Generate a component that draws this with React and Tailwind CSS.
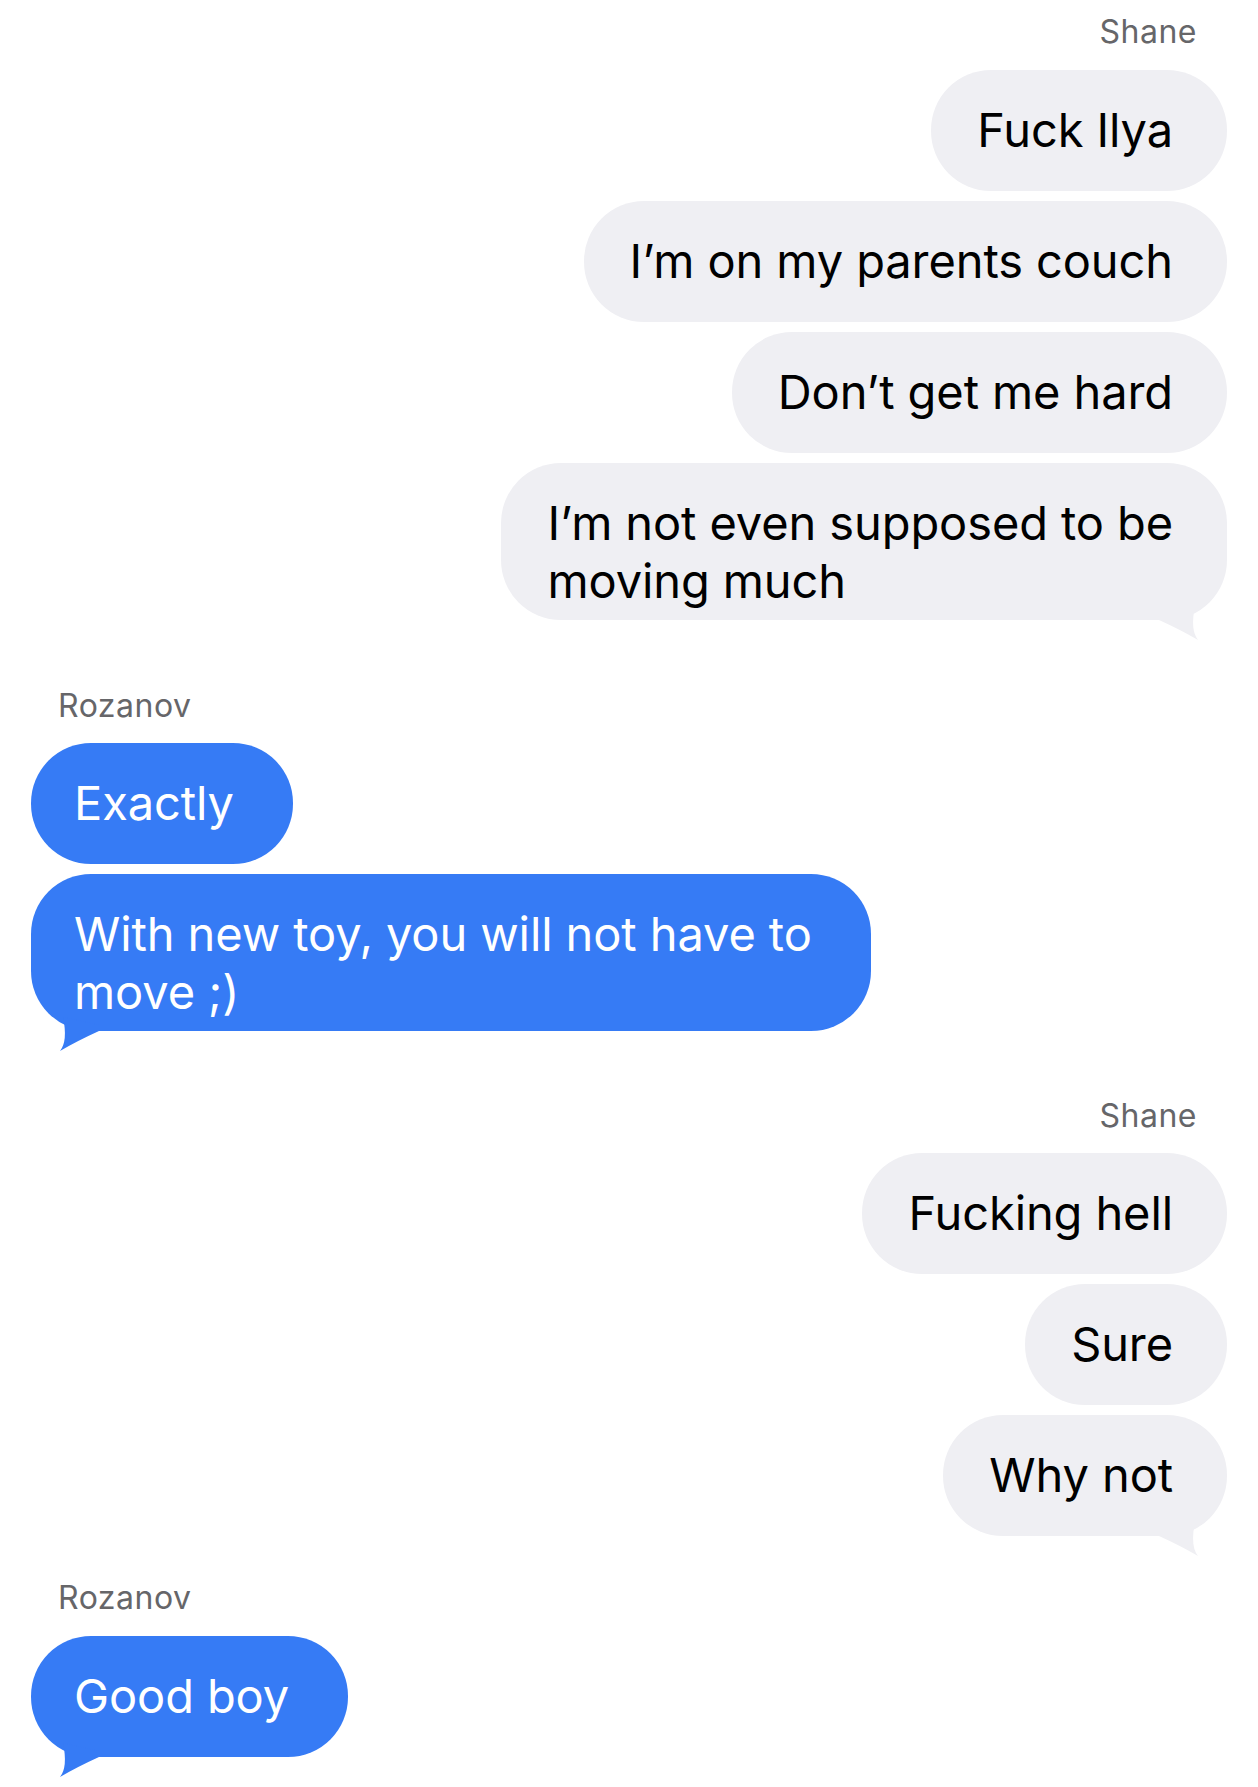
import React from 'react';

const font = { fontFamily: 'Inter, "Liberation Sans", Arial, sans-serif' };

const Tail = ({ side, color }) => (
  <svg
    width="70"
    height="60"
    viewBox="0 0 70 60"
    className={`absolute bottom-[-20px] ${side === 'me' ? 'right-0' : 'left-0 -scale-x-100'}`}
  >
    <path d="M2 34 L2 40 Q24 50 41 60 Q33 50 38 26 Z" fill={color} />
  </svg>
);

const Bubble = ({ side = 'me', tail, multi, className = '', children }) => {
  const isMe = side === 'me';
  return (
    <div className={`flex ${isMe ? 'justify-end' : 'justify-start'} ${className}`}>
      <div
        className={`relative rounded-[60px] whitespace-nowrap text-[47px] leading-[58px] tracking-[-0.1px] ${
          isMe ? 'bg-[#efeff3] text-black pl-[46px] pr-[54px]' : 'bg-[#367bf5] text-white pl-[43px] pr-[59px]'
        } ${multi ? 'pt-[31px] pb-[10px]' : 'pt-[31px] pb-[32px]'}`}
      >
        <div className="relative z-10">{children}</div>
        {tail && <Tail side={side} color={isMe ? '#efeff3' : '#367bf5'} />}
      </div>
    </div>
  );
};

const Label = ({ side, className = '', children }) => (
  <div
    className={`h-[40px] leading-[40px] text-[32px] tracking-[0.5px] text-[#666669] ${
      side === 'me' ? 'text-right pr-[30px]' : 'text-left pl-[27px]'
    } ${className}`}
  >
    {children}
  </div>
);

export default function App() {
  return (
    <div className="w-[1258px] h-[1787px] bg-white px-[31px] overflow-hidden" style={font}>
      <div className="flex flex-col">
        <Label side="me" className="mt-[12px]">Shane</Label>
        <Bubble className="mt-[18px]">Fuck Ilya</Bubble>
        <Bubble className="mt-[10px]">I’m on my parents couch</Bubble>
        <Bubble className="mt-[10px]">Don’t get me hard</Bubble>
        <Bubble className="mt-[10px]" multi tail>
          I’m not even supposed to be
          <br />
          moving much
        </Bubble>

        <Label side="them" className="mt-[66px]">Rozanov</Label>
        <Bubble side="them" className="mt-[17px]">Exactly</Bubble>
        <Bubble side="them" className="mt-[10px]" multi tail>
          With new toy, you will not have to
          <br />
          move ;)
        </Bubble>

        <Label side="me" className="mt-[65px]">Shane</Label>
        <Bubble className="mt-[17px]">Fucking hell</Bubble>
        <Bubble className="mt-[10px]">Sure</Bubble>
        <Bubble className="mt-[10px]" tail>Why not</Bubble>

        <Label side="them" className="mt-[42px]">Rozanov</Label>
        <Bubble side="them" className="mt-[18px]" tail>Good boy</Bubble>
      </div>
    </div>
  );
}
